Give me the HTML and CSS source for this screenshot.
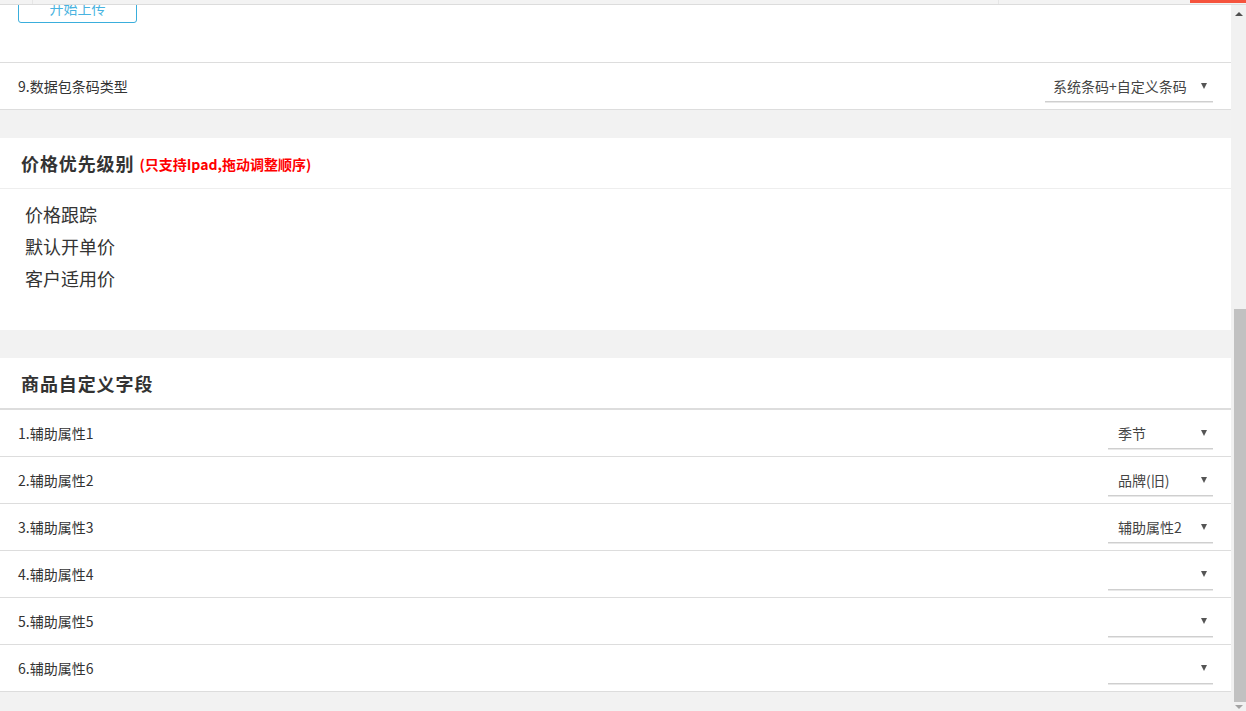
FILE: index.html
```html
<!DOCTYPE html>
<html lang="zh">
<head>
<meta charset="utf-8">
<link rel="stylesheet" href="styles.css">
</head>
<body>
<div class="topbar">
  <div class="seg seg-a"></div>
  <div class="seg seg-b"></div>
  <div class="seg seg-red"></div>
</div>
<div class="frame">
  <div class="main">
    <section class="card upload">
      <button class="btn-upload">开始上传</button>
    </section>
    <div class="row last">
      <span class="label">9.数据包条码类型</span>
      <div class="select wide"><span>系统条码+自定义条码</span><i class="caret"></i></div>
    </div>

    <section class="card gapped">
      <div class="card-head"><h2>价格优先级别</h2><span class="note">(只支持Ipad,拖动调整顺序)</span></div>
      <ul class="prio">
        <li>价格跟踪</li>
        <li>默认开单价</li>
        <li>客户适用价</li>
      </ul>
    </section>

    <section class="card gapped">
      <div class="card-head thick"><h2>商品自定义字段</h2></div>
      <div class="row"><span class="label">1.辅助属性1</span><div class="select"><span>季节</span><i class="caret"></i></div></div>
      <div class="row"><span class="label">2.辅助属性2</span><div class="select"><span>品牌(旧)</span><i class="caret"></i></div></div>
      <div class="row"><span class="label">3.辅助属性3</span><div class="select"><span>辅助属性2</span><i class="caret"></i></div></div>
      <div class="row"><span class="label">4.辅助属性4</span><div class="select"><span></span><i class="caret"></i></div></div>
      <div class="row"><span class="label">5.辅助属性5</span><div class="select"><span></span><i class="caret"></i></div></div>
      <div class="row"><span class="label">6.辅助属性6</span><div class="select"><span></span><i class="caret"></i></div></div>
    </section>
  </div>
  <div class="scrollbar">
    <div class="arrow up"></div>
    <div class="track"><div class="thumb"></div></div>
    <div class="arrow down"></div>
  </div>
</div>
</body>
</html>
```

FILE: styles.css
```css
* { box-sizing: border-box; }
html, body { margin: 0; padding: 0; height: 100%; overflow: hidden; }
body {
  background: #f2f2f2;
  font-family: "Noto Sans CJK SC", "Noto Sans", sans-serif;
  color: #333;
  display: flex;
  flex-direction: column;
}
.topbar {
  height: 5px;
  flex: none;
  background: #f3f3f3;
  border-bottom: 1px solid #dcdcdc;
  display: flex;
}
.seg { height: 4px; }
.seg-a { margin-left: 32px; width: 1px; background: #e6e6e6; }
.seg-b { margin-left: 965px; width: 1px; background: #e6e6e6; }
.seg-red { margin-left: auto; width: 56px; height: 3px; background: #f5533d; }
.frame { flex: 1; display: flex; min-height: 0; }
.main { flex: 1; overflow: hidden; }
.card { background: #fff; }
.upload {
  height: 58px;
  border-bottom: 1px solid #ddd;
  padding-left: 18px;
  overflow: hidden;
}
.btn-upload {
  display: block;
  margin-top: -13px;
  width: 119px;
  height: 31px;
  border: 1px solid #3aaedc;
  border-radius: 3px;
  background: #fff;
  color: #49b3e0;
  font-family: inherit;
  font-size: 14px;
  padding: 0;
}
.row {
  height: 47px;
  background: #fff;
  border-bottom: 1px solid #ddd;
  display: flex;
  align-items: center;
  justify-content: space-between;
  padding: 0 18px 1px;
}
.label { font-size: 14px; color: #333; }
.select {
  align-self: flex-end;
  margin-bottom: 6px;
  width: 105px;
  height: 28px;
  border-bottom: 1px solid #cfcfcf;
  box-shadow: 0 1px 0 #e8e8e8;
  display: flex;
  align-items: center;
  justify-content: space-between;
  padding: 0 6px 3px 10px;
  font-size: 14px;
  color: #444;
}
.select.wide { width: 168px; padding-left: 8px; }
.caret {
  width: 0; height: 0;
  border-left: 3px solid transparent;
  border-right: 3px solid transparent;
  border-top: 6px solid #555;
}
.gapped { margin-top: 28px; }
.card-head {
  height: 51px;
  border-bottom: 1px solid #eee;
  display: flex;
  align-items: center;
  padding-left: 21px;
  gap: 5px;
}
.card-head.thick { border-bottom: 2px solid #ddd; height: 52px; }
.card-head h2 { margin: 0; font-size: 18px; letter-spacing: 0.9px; font-weight: bold; color: #333; }
.note { color: #f00; font-size: 14px; font-weight: bold; margin-top: 2px; }
.prio {
  list-style: none;
  margin: 0;
  padding: 9px 0 36px 25px;
  font-size: 18px;
  line-height: 32px;
  color: #333;
}
.scrollbar {
  width: 15px;
  flex: none;
  background: #f1f1f1;
  display: flex;
  flex-direction: column;
  align-items: center;
}
.arrow { width: 0; height: 0; border-left: 4px solid transparent; border-right: 4px solid transparent; }
.arrow.up { border-bottom: 4px solid #505050; margin-top: 7px; margin-bottom: 5px; }
.arrow.down { border-top: 4px solid #a3a3a3; margin-top: 3px; margin-bottom: 2px; }
.track { flex: 1; width: 100%; display: flex; flex-direction: column; justify-content: flex-end; }
.thumb { height: 393px; margin-left: 3px; background: #c1c1c1; }
```
